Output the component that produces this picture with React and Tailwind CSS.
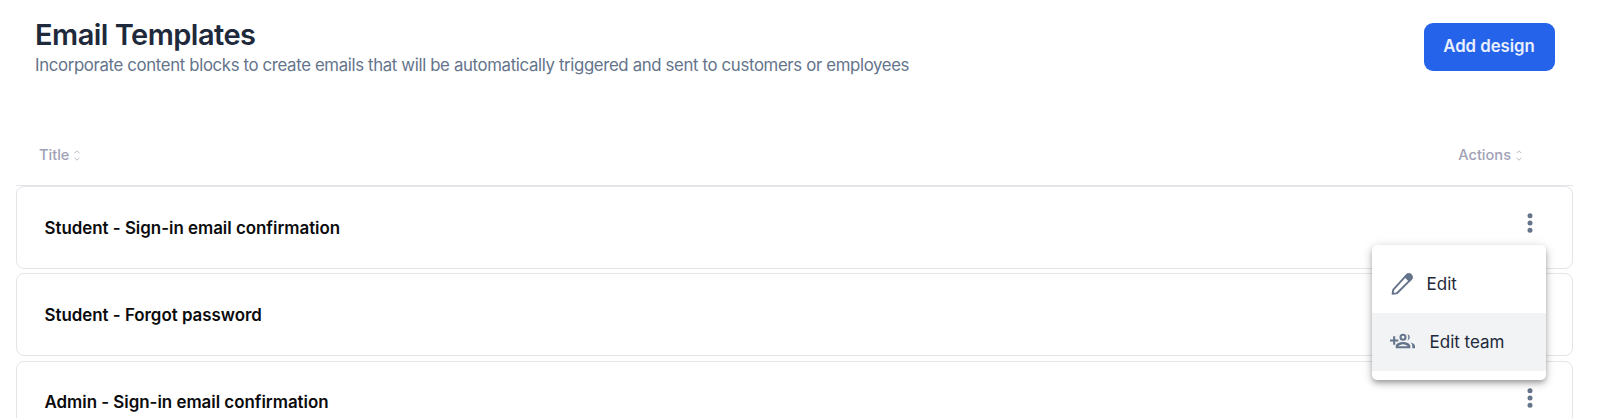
import React from 'react';

const templates = [
  { id: 1, title: 'Student - Sign-in email confirmation' },
  { id: 2, title: 'Student - Forgot password' },
  { id: 3, title: 'Admin - Sign-in email confirmation' },
];

const SortIcon = () => (
  <svg className="w-[6px] h-[11px]" viewBox="0 0 6 11" fill="none" stroke="#bcbcc9" strokeWidth="1">
    <path d="M0.5 3.3 3 0.8l2.5 2.5M0.5 7.7 3 10.2l2.5-2.5" />
  </svg>
);

const DotsIcon = () => (
  <svg className="w-[6px] h-[20px]" viewBox="0 0 6 20" fill="#64748b">
    <circle cx="3" cy="2.8" r="2.5" />
    <circle cx="3" cy="10" r="2.5" />
    <circle cx="3" cy="17.2" r="2.5" />
  </svg>
);

const PencilIcon = () => (
  <svg className="w-[24px] h-[24px]" viewBox="0 0 24 24" fill="none" stroke="#64748b" strokeWidth="1.9" strokeLinecap="round" strokeLinejoin="round">
    <path d="M15.2 4.6 16.7 3.1a2.95 2.95 0 0 1 4.200 4.200L7.700 20.500a4.500 4.500 0 0 1-1.500.9l-3.600.5.5-3.600a4.500 4.500 0 0 1 .9-1.500z" />
    <path d="M15.2 4.6 16.7 3.1a2.950 2.950 0 0 1 4.200 4.200l-1.500 1.500z" fill="#64748b" />
  </svg>
);

const GroupAddIcon = () => (
  <svg className="w-[25px] h-[25px]" viewBox="0 0 24 24" fill="#64748b">
    <path d="M5 10V7H3v3H0v2h3v3h2v-3h3v-2z" />
    <path fillRule="evenodd" d="M12.500 4.500a3.400 3.400 0 1 0 0 6.800 3.400 3.400 0 0 0 0-6.800zm0 2a1.400 1.400 0 1 1 0 2.800 1.400 1.400 0 0 1 0-2.800z" />
    <path fillRule="evenodd" d="M12.500 12.500c-2.400 0-7 1.200-7 3.800v2.200h14v-2.200c0-2.600-4.600-3.800-7-3.800zm-4.500 4.100c.6-.9 2.600-1.900 4.500-1.900s3.900 1 4.500 1.900z" />
    <path d="M16.600 4.700a3.400 3.400 0 0 1 0 6.500c1.300-1.900 1.300-4.600 0-6.500zM19.500 12.900c1.300.9 1.900 2 1.900 3.400v2.200H24v-2.200c0-1.800-2.300-2.900-4.500-3.400z" />
  </svg>
);

const HeaderCell = ({ label }) => (
  <div className="flex items-center gap-[5px]">
    <span className="text-[14.6px] leading-5 font-medium text-[#a1a1b5]">{label}</span>
    <SortIcon />
  </div>
);

const TemplateRow = ({ title }) => (
  <div className="h-[82.6px] flex-shrink-0 flex justify-between border border-[#e4e5e9] rounded-[8px] pl-[27.5px] pr-[39px]">
    <span className="pt-[28.5px] text-[16.9px] leading-6 font-semibold tracking-[-0.01px] text-[#0b0b0d]">{title}</span>
    <button className="self-start pt-[26px]">
      <DotsIcon />
    </button>
  </div>
);

const ActionsMenu = () => (
  <div className="absolute right-[27.5px] top-[59px] z-10 w-[173.5px] h-[135px] pt-[9.5px] bg-white rounded-[5px] text-[17px] text-[#1e293b] shadow-[0_3px_5px_-1px_rgba(0,0,0,0.25),0_4px_9px_rgba(0,0,0,0.16),0_1px_12px_rgba(0,0,0,0.10)]">
    <button className="flex items-center w-full h-[58px] pl-[17.5px] gap-[13px]">
      <PencilIcon />
      <span className="pt-[2px]">Edit</span>
    </button>
    <button className="flex items-center w-full h-[58px] pl-[18px] gap-[14.5px] bg-[#f1f3f5]">
      <GroupAddIcon />
      <span className="pt-[2px]">Edit team</span>
    </button>
  </div>
);

export default function App() {
  return (
    <div className="w-[1600px] h-[418px] overflow-hidden bg-white font-['Inter',sans-serif]">
      <header className="flex justify-between h-[128px] pl-[35px] pr-[45.5px] pt-[23px]">
        <div>
          <h1 className="-mt-px text-[29px] leading-[26px] font-semibold tracking-[-0.52px] text-[#1e293b]">Email Templates</h1>
          <p className="mt-[5px] text-[16.8px] leading-6 tracking-[-0.355px] text-[#64748b]">
            Incorporate content blocks to create emails that will be automatically triggered and sent to customers or employees
          </p>
        </div>
        <button className="w-[131px] h-[48px] rounded-[9px] bg-[#2563eb] text-[16.8px] font-semibold tracking-[-0.05px] text-[#e9effd]">
          Add design
        </button>
      </header>
      <main className="mx-[16px] w-[1557px]">
        <div className="flex items-center justify-between h-[58px] pl-[23px] pr-[51px] pb-[3px] border-b border-[#e4e5e9]">
          <HeaderCell label="Title" />
          <HeaderCell label="Actions" />
        </div>
        <div className="relative flex flex-col gap-[4.8px]">
          {templates.map((template) => (
            <TemplateRow key={template.id} title={template.title} />
          ))}
          <ActionsMenu />
        </div>
      </main>
    </div>
  );
}
